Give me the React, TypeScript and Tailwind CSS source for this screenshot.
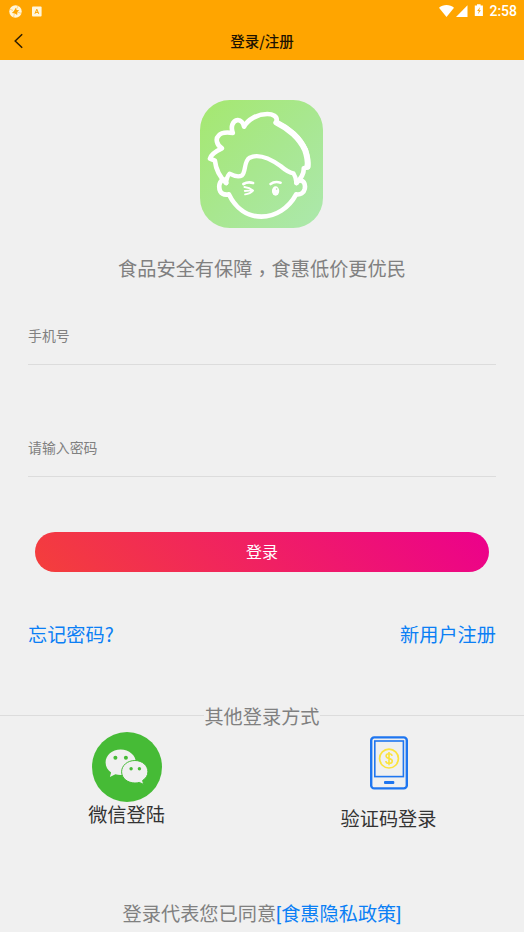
function StatusBar() {
  return (
    <div className="flex h-[22px] items-center justify-between pl-[9px] pr-[7px]">
      <div className="flex items-center gap-[9px]">
        <svg width="13" height="13" viewBox="0 0 13 13">
          <circle cx="6.5" cy="6.5" r="6.2" fill="#fff6dc" />
          <path d="M6.8 2.8 7.6 5 10.2 5.3 8.4 7.1 8.2 10 5.9 8.4 2.9 7.9 4.9 6Z" fill="#ffa500" />
          <path d="M.8 4.2 4 5.4M9 1 7.4 4.4M12.2 8.3 8.8 7.3M4.6 12 5.4 8.6" stroke="#ffa500" strokeWidth="0.4" />
        </svg>
        <svg width="11" height="11" viewBox="0 0 11 11">
          <rect x="1" y="0.5" width="9.6" height="10" rx="1" fill="#fff6dc" />
          <path d="M3.9 7.8 5.8 3.2 7.7 7.8M4.5 6.4h2.6" fill="none" stroke="#ffa500" strokeWidth="1" />
        </svg>
      </div>
      <div className="flex items-center">
        <svg width="48" height="14" viewBox="0 0 48 14">
          <path d="M0 3.7C4 .2 11 .2 15 3.7L7.5 13Z" fill="#fff" />
          <path d="M28.5 1.2V13H17Z" fill="#fff" />
          <path d="M38 .2h3.6v1.3h2.3V12h-8.1V1.5H38Z" fill="#fff" />
          <path d="m41.2 3.1-3.1 4h1.8l-1 3.2 3-4.1h-1.8Z" fill="#ffa500" />
        </svg>
        <span className="ml-0.5 text-sm leading-none font-medium text-white [font-family:Roboto,sans-serif]">2:58</span>
      </div>
    </div>
  );
}

function BoyLogo() {
  return (
    <svg className="mr-px" width="123" height="128" viewBox="14 14 371 384" preserveAspectRatio="none">
      <defs>
        <linearGradient id="logo" x1="0" y1="0" x2="1" y2="1">
          <stop offset="0" stopColor="#a5e86f" />
          <stop offset="0.5" stopColor="#a8e78f" />
          <stop offset="1" stopColor="#ace8ad" />
        </linearGradient>
      </defs>
      <rect x="14" y="14" width="371" height="384" rx="90" fill="url(#logo)" />
      <g fill="none" stroke="#fff" strokeLinecap="round" strokeLinejoin="round">
        <path
          strokeWidth="14"
          d="M93 263C76 247 62 222 59 196L44 190C47 176 61 168 80 159C64 149 60 130 70 121C78 111 93 110 113 113C106 94 112 76 128 74C139 75 144 82 147 94C158 72 188 56 217 56C233 56 248 63 245 77L242 82C282 97 315 124 333 164C339 183 341 204 340 216L327 219C328 236 320 248 305 263"
        />
        <path strokeWidth="18" d="M247 83C281 99 315 129 331 164C338 184 340 203 338 214" />
        <path
          strokeWidth="13"
          d="M93 263C94 249 96 242 103 235C118 243 133 245 141 240C153 228 146 197 164 187C194 173 230 193 257 212C271 224 281 232 296 234C302 243 304 251 305 263"
        />
        <path
          strokeWidth="14"
          d="M85 252C72 257 69 274 75 288C80 297 90 299 101 297C122 340 157 364 199 364C242 364 282 338 304 297C317 299 327 293 330 280C333 263 325 255 314 255"
        />
        <path strokeWidth="8" d="M145 266C154 261 164 260 174 263M227 266C236 259 247 259 257 262" />
        <path strokeWidth="5.5" d="M148 275C159 276 168 280 174 285C166 285 157 286 149 287M174 286C169 292 162 296 150 297" />
      </g>
      <ellipse cx="242" cy="287" rx="11" ry="14" fill="#fff" />
      <circle cx="245" cy="281" r="2.5" fill="#a9e69b" />
    </svg>
  );
}

function WechatIcon() {
  return (
    <svg width="70" height="70" viewBox="0 0 70 70">
      <circle cx="35" cy="35" r="35" fill="#46bb36" />
      <g transform="translate(-.4 0)">
        <path
          d="M29 17.5c-8.5 0-15 5.7-15 13 0 4.2 2.1 7.7 5.5 10.1L18.3 45l5.5-2.7c1.7.5 3.4.7 5.2.7 8.6 0 15.3-5.5 15.3-12.5S37.6 17.5 29 17.5Z"
          fill="#f0f0f0"
        />
        <path
          d="M43.3 28.5c-7.5 0-13.3 5-13.3 11.3S35.8 51 43.3 51c1.6 0 3-.2 4.3-.6l4.6 2-1.2-3.9c3.3-2.1 5.3-5.1 5.3-8.7 0-6.3-5.6-11.3-13-11.3Z"
          fill="#f0f0f0"
          stroke="#46bb36"
          strokeWidth="1"
        />
        <g fill="#46bb36">
          <circle cx="23.8" cy="25.7" r="2" />
          <circle cx="34.3" cy="25.7" r="2" />
          <circle cx="39.5" cy="36.7" r="1.7" />
          <circle cx="47.8" cy="36.7" r="1.7" />
        </g>
      </g>
    </svg>
  );
}

function PhoneIcon() {
  return (
    <svg width="38" height="54" viewBox="0 0 38 54" fill="none">
      <rect x="1.2" y="1.4" width="35.6" height="51" rx="3" stroke="#1f76f0" strokeWidth="2.4" />
      <rect x="4.8" y="5" width="28.6" height="35.6" stroke="#1f76f0" strokeWidth="1.6" />
      <rect x="14" y="45" width="10.3" height="3" rx="1" fill="#1f76f0" />
      <circle cx="19" cy="22.6" r="9.4" stroke="#fbe33d" strokeWidth="1.7" />
      <path
        d="M22.1 19.9c-.2-1.4-1.3-2.1-3.1-2.1-1.7 0-2.9.8-2.9 2.2 0 3.3 6.2 1.5 6.2 5 0 1.5-1.2 2.4-3.2 2.4s-3.2-.9-3.3-2.4M19 16v13.2"
        stroke="#fbe33d"
        strokeWidth="1.6"
      />
    </svg>
  );
}

const fields = ["手机号", "请输入密码"];

export default function App() {
  return (
    <div className="flex h-[932px] w-[524px] flex-col overflow-hidden bg-[#f0f0f0] text-[19.2px] leading-7 text-[#808080] [font-family:'Noto_Sans_CJK_SC',sans-serif]">
      <header className="h-[60px] shrink-0 bg-[#ffa500]">
        <StatusBar />
        <div className="grid h-[38px] grid-cols-3 items-center">
          <svg className="ml-3.5" width="10" height="16" viewBox="0 0 10 16" fill="none">
            <path d="M8.2 1.2 1.2 8l7 6.8" stroke="#2c1c00" strokeWidth="1.5" />
          </svg>
          <h1 className="text-center text-[14.5px] font-medium text-[#1c1200]">登录/注册</h1>
        </div>
      </header>

      <section className="flex shrink-0 flex-col items-center pt-10">
        <BoyLogo />
        <p className="mt-[26px] whitespace-nowrap">
          食品安全有保障
          <span lang="zh-TW" className="inline-block translate-y-[5px] [font-family:'Noto_Sans_CJK_TC',sans-serif]">，</span>
          食惠低价更优民
        </p>
      </section>

      <form className="mx-7 flex flex-col">
        {fields.map((label) => (
          <label key={label} className="mb-12 block h-16 border-b border-[#dcdcdc] pt-5 text-[13.9px] leading-7 first:mt-[19px]">
            {label}
          </label>
        ))}
        <button
          type="button"
          className="mx-[7px] mt-[7.4px] h-10 rounded-full bg-linear-[45deg,#f43f3b,#ec008c] pb-0.5 text-base text-white"
        >
          登录
        </button>
      </form>

      <div className="mx-7 mt-[47.6px] flex justify-between text-[#0b7ff5]">
        <span>忘记密码?</span>
        <span>新用户注册</span>
      </div>

      <div className="mt-[54px] flex items-center">
        <div className="mb-px h-px flex-1 bg-[#dcdcdc]" />
        <span>其他登录方式</span>
        <div className="mb-px h-px flex-1 bg-[#dcdcdc]" />
      </div>

      <div className="grid grid-cols-2 text-[#333]">
        <div className="flex flex-col items-center pt-[1.6px] pr-[9px]">
          <WechatIcon />
          <span className="-mt-[1.6px]">微信登陆</span>
        </div>
        <div className="flex flex-col items-center pt-1.5 pr-[9px]">
          <PhoneIcon />
          <span className="mt-3.5">验证码登录</span>
        </div>
      </div>

      <footer className="mt-auto pb-[3px] text-center">
        登录代表您已同意
        <span className="text-[#0b7ff5] [font-family:Roboto,'Noto_Sans_CJK_SC',sans-serif]">[食惠隐私政策]</span>
      </footer>
    </div>
  );
}
